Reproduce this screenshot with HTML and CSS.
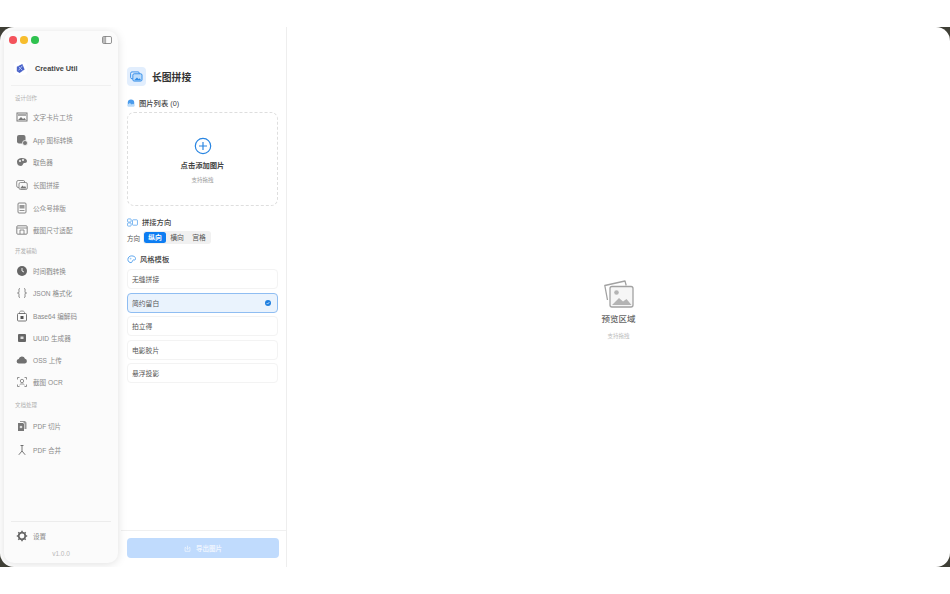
FILE: index.html
```html
<!DOCTYPE html>
<html lang="zh">
<head>
<meta charset="utf-8">
<title>Creative Util</title>
<link rel="stylesheet" href="styles.css">
</head>
<body>
<div class="window">
  <div class="app">
    <div class="side-wrap">
      <aside class="sidebar">
        <div class="titlebar">
          <span class="dot red"></span><span class="dot yellow"></span><span class="dot green"></span>
          <svg class="toggle" viewBox="0 0 10 8" width="10" height="8"><rect x=".5" y=".5" width="9" height="7" rx="1.300" fill="none" stroke="#666" stroke-width=".7"/><path d="M3.600.5v7" stroke="#666" stroke-width=".7"/><rect x="1" y="1" width="2.500" height="6" fill="#bbb"/></svg>
        </div>
        <div class="brand">
          <span class="logo"><svg viewBox="0 0 12 12" width="11" height="11"><path d="M2 4l6-3 2.500 6L5 11 2 9z" fill="#4a63c9"/><path d="M4 4l4 4M8 3L4 8" stroke="#b8c8f5" stroke-width="1"/></svg></span>
          <span class="brand-name">Creative Util</span>
        </div>
        <div class="group-label first">设计创作</div>
        <div class="item"><svg viewBox="0 0 12 12"><rect x="1" y="2" width="10" height="8" fill="none" stroke="#777" stroke-width="1"/><path d="M2 9l3-3 2 2 1.500-1L10 9z" fill="#777"/><rect x="2" y="3" width="8" height="2" fill="#aaa"/></svg><span>文字卡片工坊</span></div>
        <div class="item"><svg viewBox="0 0 12 12"><rect x="1" y="1" width="8.500" height="8.500" rx="2" fill="#777"/><circle cx="9" cy="9" r="2.500" fill="#777" stroke="#fafafa" stroke-width=".8"/></svg><span>App 图标转换</span></div>
        <div class="item"><svg viewBox="0 0 12 12"><path d="M1 6c0-3 2.500-4 5-4s5 1 5 3-2 2-3 2-1 3-3 3-4-1-4-4z" fill="#777"/><circle cx="4" cy="5" r="1" fill="#fafafa"/><circle cx="7" cy="4" r="1" fill="#fafafa"/></svg><span>取色器</span></div>
        <div class="item"><svg viewBox="0 0 12 12"><rect x=".7" y="1.500" width="8" height="7" rx="1.500" fill="none" stroke="#777" stroke-width=".8"/><rect x="3" y="3.500" width="8.300" height="7" rx="1.500" fill="#fafafa" stroke="#777" stroke-width=".8"/><path d="M4 9.500l2.500-3 1.500 1.500 1-1 1.500 2.500z" fill="#777"/></svg><span>长图拼接</span></div>
        <div class="item"><svg viewBox="0 0 12 12"><rect x="2" y="1" width="8" height="10" rx="1" fill="none" stroke="#777" stroke-width=".9"/><rect x="3.500" y="3" width="5" height="3.500" fill="#999"/><path d="M3.500 8.500h5" stroke="#777" stroke-width=".8"/></svg><span>公众号排版</span></div>
        <div class="item"><svg viewBox="0 0 12 12"><rect x=".8" y="1.800" width="10.400" height="8.400" rx="1" fill="none" stroke="#777" stroke-width=".9"/><path d="M1 4h10M4 10V6h4v4" fill="none" stroke="#777" stroke-width=".8"/></svg><span>截图尺寸适配</span></div>
        <div class="group-label second">开发辅助</div>
        <div class="item tight"><svg viewBox="0 0 12 12"><circle cx="6" cy="6" r="5" fill="#666"/><path d="M6 3v3l2 1" fill="none" stroke="#fafafa" stroke-width=".9"/></svg><span>时间戳转换</span></div>
        <div class="item tight"><svg viewBox="0 0 12 12"><path d="M4 1.500C2.500 1.500 3 3 3 4.500S2 6 1.500 6C2 6 3 6 3 7.500S2.500 10.500 4 10.500M8 1.500c1.500 0 1 1.500 1 3S10 6 10.500 6C10 6 9 6 9 7.500s.5 3-1 3" fill="none" stroke="#666" stroke-width=".8"/></svg><span>JSON 格式化</span></div>
        <div class="item tight"><svg viewBox="0 0 12 12"><path d="M3.500 4V2.500C3.500 1.500 4.500 1 6 1s2.500.5 2.500 1.500V4" fill="none" stroke="#999" stroke-width="1"/><rect x="1.500" y="3.500" width="9" height="7.500" rx="1" fill="none" stroke="#666" stroke-width=".9"/><rect x="4.500" y="6" width="3" height="3" fill="#555"/></svg><span>Base64 编解码</span></div>
        <div class="item tight"><svg viewBox="0 0 12 12"><rect x="2" y="2" width="8" height="8" rx="1" fill="#666"/><rect x="4.500" y="4.500" width="3" height="2.500" fill="#ddd"/></svg><span>UUID 生成器</span></div>
        <div class="item tight"><svg viewBox="0 0 12 12"><path d="M3 9.500a2.200 2.200 0 0 1-.3-4.400A3.300 3.300 0 0 1 9 4.800a2.400 2.400 0 0 1 0 4.700z" fill="#707070"/></svg><span>OSS 上传</span></div>
        <div class="item tight"><svg viewBox="0 0 12 12"><path d="M1.500 3.500v-2h2M8.500 1.500h2v2M10.500 8.500v2h-2M3.500 10.500h-2v-2" fill="none" stroke="#777" stroke-width=".8"/><circle cx="6" cy="5" r="1.700" fill="none" stroke="#777" stroke-width=".8"/><path d="M3.500 9c.5-1.500 4.500-1.500 5 0" fill="none" stroke="#777" stroke-width=".8"/></svg><span>截图 OCR</span></div>
        <div class="group-label third">文档处理</div>
        <div class="item wide"><svg viewBox="0 0 12 12"><path d="M2 3h5l1 1v7H2z" fill="#777"/><path d="M4 1h5l1.500 1.500V9H8.500V3.500L7 2H4z" fill="#999"/><circle cx="5" cy="7" r="1.300" fill="#ddd"/></svg><span>PDF 切片</span></div>
        <div class="item wide"><svg viewBox="0 0 12 12"><path d="M6 1v6M4.500 1.500h3M6 7L2.800 10.800M6 7l3.200 3.800" fill="none" stroke="#666" stroke-width=".9"/></svg><span>PDF 合并</span></div>
        <div class="side-foot">
          <div class="item"><svg viewBox="0 0 12 12"><circle cx="6" cy="6" r="3.300" fill="none" stroke="#666" stroke-width="1.800"/><path d="M6 .8v2M6 9.200v2M.8 6h2M9.200 6h2M2.300 2.300l1.400 1.400M8.300 8.300l1.400 1.400M9.700 2.300L8.300 3.700M3.700 8.300L2.300 9.700" stroke="#666" stroke-width="1.500"/></svg><span>设置</span></div>
          <div class="version">v1.0.0</div>
        </div>
      </aside>
    </div>

    <section class="panel">
      <div class="panel-body">
        <header class="head">
          <span class="head-icon"><svg viewBox="0 0 14 12" width="13" height="11"><rect x=".6" y="1" width="9.500" height="7.500" rx="1.500" fill="none" stroke="#2d8ae8" stroke-width="1"/><rect x="3" y="3" width="10" height="8" rx="1.500" fill="#bcdcfb" stroke="#2d8ae8" stroke-width="1"/><path d="M4.500 10l3-3 2 2 1-1 1.500 2z" fill="#2d8ae8"/></svg></span>
          <h1>长图拼接</h1>
        </header>
        <div class="sec-title list-title"><svg viewBox="0 0 10 10" width="8" height="8"><path d="M1 9V4.500a4 4 0 0 1 8 0V9z" fill="#4b9cec"/><path d="M1 7l2.500-2L6 7l1.500-1L9 7v2H1z" fill="#b9dbfa"/></svg><span>图片列表 (0)</span></div>
        <div class="drop">
          <svg viewBox="0 0 18 18" width="18" height="18"><circle cx="9" cy="9" r="7.700" fill="none" stroke="#2a86e2" stroke-width="1.200"/><path d="M9 5v8M5 9h8" stroke="#2a86e2" stroke-width="1.200"/></svg>
          <div class="drop-main">点击添加图片</div>
          <div class="drop-sub">支持拖拽</div>
        </div>
        <div class="sec-title dir-title"><svg viewBox="0 0 12 10" width="11" height="9"><rect x=".5" y="1" width="4" height="3.500" rx=".8" fill="none" stroke="#4b9cec" stroke-width=".8"/><rect x=".5" y="5.500" width="4" height="3.500" rx=".8" fill="none" stroke="#4b9cec" stroke-width=".8"/><rect x="6" y="2" width="5.500" height="6" rx=".8" fill="none" stroke="#4b9cec" stroke-width=".8"/></svg><span>拼接方向</span></div>
        <div class="dir-row">
          <span class="dir-label">方向</span>
          <div class="seg">
            <span class="seg-item active">纵向</span>
            <span class="seg-item">横向</span>
            <span class="seg-item">宫格</span>
          </div>
        </div>
        <div class="sec-title tpl-title"><svg viewBox="0 0 10 10" width="9" height="9"><path d="M1 5c0-2.500 2-4 4.200-4S9.500 2 9.500 4 8 5.500 7 5.500 6 8.500 4.500 8.500 1 7.500 1 5z" fill="none" stroke="#4b9cec" stroke-width="1"/><circle cx="4" cy="4" r="1" fill="#9ccbf6"/></svg><span>风格模板</span></div>
        <div class="tpl-list">
          <div class="tpl">无缝拼接</div>
          <div class="tpl selected">简约留白<svg viewBox="0 0 8 8" width="6" height="6"><circle cx="4" cy="4" r="4" fill="#1f7fe0"/><path d="M2.200 4.100l1.300 1.300 2.300-2.600" fill="none" stroke="#fff" stroke-width=".9"/></svg></div>
          <div class="tpl">拍立得</div>
          <div class="tpl">电影胶片</div>
          <div class="tpl">悬浮投影</div>
        </div>
      </div>
      <footer class="panel-foot">
        <button class="export"><svg viewBox="0 0 10 10" width="7" height="7"><path d="M3 3.500H1.500v5.500h7V3.500H7M5 1v5M3.500 4.800L5 6.300l1.500-1.500" fill="none" stroke="#fff" stroke-width=".8"/></svg>导出图片</button>
      </footer>
    </section>

    <main class="preview">
      <svg viewBox="0 0 30 28" width="30" height="28"><path d="M3.500 20L.8 5.500 21 1l1.200 4.500" fill="none" stroke="#a2a2a2" stroke-width="1.300" stroke-linejoin="round"/><rect x="6" y="6.500" width="23" height="20.500" rx="2" fill="#f6f6f6" stroke="#a2a2a2" stroke-width="1.300"/><circle cx="12.500" cy="12.500" r="2.300" fill="#b4b4b4"/><path d="M8 25l7-7 4 3.500 3.500-2.500 5 6z" fill="#b4b4b4"/></svg>
      <div class="preview-title">预览区域</div>
      <div class="preview-sub">支持拖拽</div>
    </main>
  </div>
</div>
</body>
</html>
```
FILE: styles.css
```css
* { box-sizing: border-box; }
html, body { margin: 0; padding: 0; background: #fff; }
body {
  width: 950px;
  height: 594px;
  padding-top: 27px;
  font-family: "Liberation Sans", "Noto Sans CJK SC", sans-serif;
  overflow: hidden;
}
.window {
  height: 540px;
  background: #3f3f36;
}
.app {
  display: flex;
  height: 100%;
  background: #fff;
  border-radius: 14px;
  overflow: hidden;
}
.side-wrap {
  position: relative;
  z-index: 1;
  flex: 0 0 121px;
  padding: 4px 3px 4px 4px;
}
.sidebar {
  display: flex;
  flex-direction: column;
  height: 100%;
  padding: 0 5px;
  background: #fbfbfb;
  border-radius: 10px;
  box-shadow: 0 1px 10px rgba(0, 0, 0, .13);
}
.titlebar {
  display: flex;
  align-items: center;
  gap: 3.500px;
  height: 18px;
}
.dot { width: 7.500px; height: 7.500px; border-radius: 50%; }
.red { background: #f4535c; }
.yellow { background: #f7bd2d; }
.green { background: #2fc24f; }
.toggle { margin-left: auto; margin-right: 1px; }
.brand {
  display: flex;
  align-items: center;
  gap: 8px;
  height: 35px;
  margin: 2px 2px 0;
  padding: 0 0 0 3px;
  border-bottom: 1px solid #f0f0f0;
}
.logo {
  display: flex;
  align-items: center;
  justify-content: center;
  width: 13px;
  height: 13px;
  border-radius: 3px;
  background: #fff;
}
.brand-name { font-size: 7.300px; font-weight: 700; color: #444; }
.group-label {
  padding-left: 6px;
  font-size: 5.500px;
  line-height: 16px;
  color: #b0b0b0;
}
.group-label.first { margin-top: 4px; height: 16px; }
.group-label.second { margin-top: 1.500px; height: 17px; }
.group-label.third { margin-top: 3.500px; height: 17px; }
.item {
  display: flex;
  align-items: center;
  gap: 5px;
  height: 22.600px;
  padding-left: 7px;
  font-size: 6.600px;
  color: #8a8a8a;
}
.item svg { flex: none; width: 12px; height: 12px; }
.item.tight { height: 22.200px; }
.item.wide { height: 24px; }
.side-foot {
  margin: auto 2px 0;
  padding-top: 3px;
  border-top: 1px solid #ececec;
}
.side-foot .item { padding-left: 5px; height: 22px; }
.version {
  padding-top: 1px;
  height: 16px;
  font-size: 6.500px;
  line-height: 12px;
  text-align: center;
  color: #b8b8b8;
}
.panel {
  display: flex;
  flex-direction: column;
  flex: 0 0 166px;
  background: #fff;
  border-right: 1px solid #eeeeee;
}
.panel-body { flex: 1; padding: 40px 8px 0 6px; }
.head { display: flex; align-items: center; gap: 6px; }
.head-icon {
  display: flex;
  align-items: center;
  justify-content: center;
  width: 19px;
  height: 19px;
  border-radius: 4px;
  background: #e2eefd;
}
.head h1 { margin: 0; font-size: 9.800px; font-weight: 700; color: #333; }
.sec-title {
  display: flex;
  align-items: center;
  gap: 4px;
  font-size: 7.300px;
  font-weight: 500;
  color: #444;
}
.list-title { margin-top: 11px; height: 12px; }
.drop {
  display: flex;
  flex-direction: column;
  align-items: center;
  height: 94px;
  margin-top: 3px;
  padding-top: 24px;
  border: 1px dashed #dedede;
  border-radius: 7px;
}
.drop-main { margin-top: 5px; font-size: 7.300px; font-weight: 700; color: #444; line-height: 12px; }
.drop-sub { margin-top: 3px; font-size: 5.500px; color: #9a9a9a; line-height: 10px; }
.dir-title { margin-top: 10px; height: 12px; }
.dir-row { display: flex; align-items: center; gap: 3px; height: 13px; margin-top: 3px; }
.dir-label { width: 13px; font-size: 6.500px; color: #555; }
.seg {
  display: flex;
  height: 13px;
  padding: 1px;
  border-radius: 3px;
  background: #f1f1f1;
}
.seg-item {
  width: 22px;
  font-size: 6.800px;
  line-height: 11px;
  text-align: center;
  color: #555;
  border-radius: 2.500px;
}
.seg-item.active { background: #0d7df2; color: #fff; font-weight: 700; }
.tpl-title { margin-top: 9px; height: 12px; }
.tpl-list { display: flex; flex-direction: column; gap: 3.500px; margin-top: 4px; }
.tpl {
  display: flex;
  align-items: center;
  justify-content: space-between;
  height: 20px;
  padding: 0 6px 0 4px;
  border: 1px solid #f3f3f3;
  border-radius: 4px;
  font-size: 6.800px;
  color: #555;
}
.tpl.selected {
  border-color: #8fbdf2;
  background: #eaf3fd;
}
.panel-foot { height: 37px; padding: 7px 7px 0 6px; border-top: 1px solid #f0f0f0; }
.export {
  display: flex;
  align-items: center;
  justify-content: center;
  gap: 5px;
  width: 152px;
  height: 20px;
  padding: 0;
  border: 0;
  border-radius: 4px;
  background: #c0dbfd;
  color: #eef5ff;
  font: 700 6.500px "Liberation Sans", "Noto Sans CJK SC", sans-serif;
}
.preview {
  flex: 1;
  display: flex;
  flex-direction: column;
  align-items: center;
  padding-top: 253px;
}
.preview-title { margin-top: 5px; font-size: 8.500px; font-weight: 500; color: #666; line-height: 12px; }
.preview-sub { margin-top: 6px; font-size: 5.500px; color: #bbb; line-height: 10px; }
```
